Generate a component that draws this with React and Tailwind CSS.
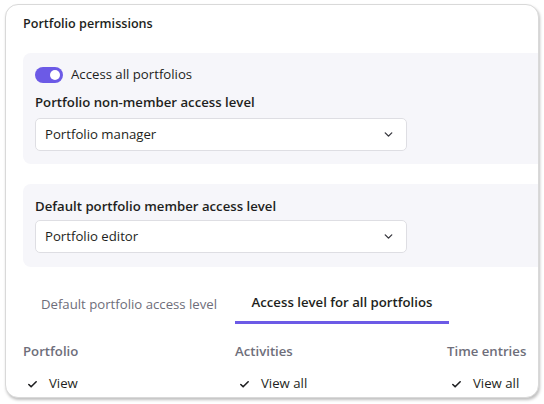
import { Check, ChevronDown } from "lucide-react";

const font = { fontFamily: '"Open Sans", "Noto Sans", sans-serif' };

function Select({ value }) {
    return (
        <div className="w-[372px] h-[33px] flex items-center justify-between pl-[9px] pr-[11px] bg-white border border-[#dedee3] rounded-[5px] text-[13.2px] text-[#1e1f21]">
            <span>{value}</span>
            <ChevronDown size={13} strokeWidth={2.6} className="text-[#3a3a40]" />
        </div>
    );
}

function Toggle() {
    return (
        <div className="w-[28px] h-[16px] rounded-full bg-[#6c5ae6] flex items-center justify-end pr-[3px]">
            <div className="w-[10px] h-[10px] rounded-full bg-white" />
        </div>
    );
}

function Column({ title, item }) {
    return (
        <div className="w-[212px] flex flex-col">
            <div className="h-[20px] flex items-center text-[13.2px] font-semibold text-[#6e6e7a]">{title}</div>
            <div className="mt-[12px] h-[20px] flex items-center gap-[11px] pl-[4px] text-[13.2px] text-[#1e1f21]">
                <Check size={11} strokeWidth={3.5} />
                <span>{item}</span>
            </div>
        </div>
    );
}

export default function App() {
    return (
        <div className="w-[544px] h-[404px] bg-white pl-[5px] pt-[4px]" style={font}>
            <div className="w-[534px] h-[394px] rounded-[13px] border border-[#d9d9d9] shadow-[1px_2px_3px_rgba(0,0,0,0.25)] bg-white overflow-hidden">
                <div className="w-[660px] pl-[17px] pt-[9px]">
                    <h2 className="h-[20px] flex items-center text-[12.6px] font-semibold text-[#1e1f21]">
                        Portfolio permissions
                    </h2>

                    {/* Non-member access */}
                    <div className="mt-[19px] rounded-[8px] bg-[#f6f6fa] pl-[12px] pt-[13px] pb-[13px]">
                        <div className="flex items-center gap-[8px] h-[18px]">
                            <Toggle />
                            <span className="text-[13.2px] text-[#1e1f21]">Access all portfolios</span>
                        </div>
                        <div className="mt-[9px] h-[20px] flex items-center text-[13.2px] font-semibold text-[#1e1f21]">
                            Portfolio non-member access level
                        </div>
                        <div className="mt-[5px]">
                            <Select value="Portfolio manager" />
                        </div>
                    </div>

                    {/* Member access */}
                    <div className="mt-[20px] rounded-[8px] bg-[#f6f6fa] pl-[12px] pt-[13px] pb-[14px]">
                        <div className="h-[20px] flex items-center text-[13.2px] font-semibold text-[#1e1f21]">
                            Default portfolio member access level
                        </div>
                        <div className="mt-[3px]">
                            <Select value="Portfolio editor" />
                        </div>
                    </div>

                    {/* Tabs */}
                    <div className="mt-[18px] flex">
                        <div className="w-[212px] h-[39px] flex items-center justify-center text-[13.2px] text-[#6e6e7a]">
                            Default portfolio access level
                        </div>
                        <div className="w-[214px] h-[39px] flex items-center justify-center text-[13.2px] font-semibold text-[#1e1f21] border-b-[3px] border-[#6c5ae6]">
                            Access level for all portfolios
                        </div>
                    </div>

                    <div className="mt-[18px] flex">
                        <Column title="Portfolio" item="View" />
                        <Column title="Activities" item="View all" />
                        <Column title="Time entries" item="View all" />
                    </div>
                </div>
            </div>
        </div>
    );
}
